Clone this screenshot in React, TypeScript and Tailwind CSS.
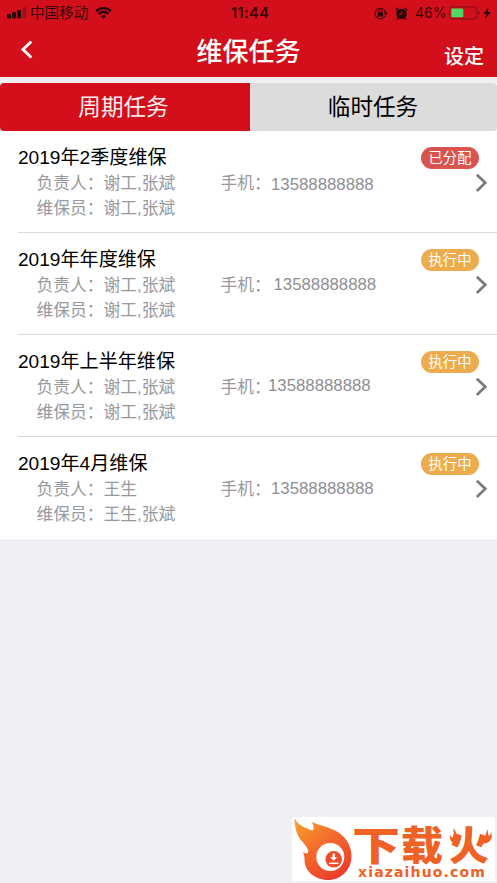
import clsx from "clsx";

type Task = {
  title: string;
  owner: string;
  staff: string;
  phone: string;
  phoneClass: string;
  status: "已分配" | "执行中";
};

const tasks: Task[] = [
  { title: "2019年2季度维保", owner: "谢工,张斌", staff: "谢工,张斌", phone: "13588888888", phoneClass: "ml-[.5px] mt-px", status: "已分配" },
  { title: "2019年年度维保", owner: "谢工,张斌", staff: "谢工,张斌", phone: "13588888888", phoneClass: "ml-[3px] -mt-px", status: "执行中" },
  { title: "2019年上半年维保", owner: "谢工,张斌", staff: "谢工,张斌", phone: "13588888888", phoneClass: "-ml-[2.5px] -mt-[2px]", status: "执行中" },
  { title: "2019年4月维保", owner: "王生", staff: "王生,张斌", phone: "13588888888", phoneClass: "ml-[.5px] -mt-px", status: "执行中" },
];

function StatusBar() {
  return (
    <div className="relative flex h-[26px] items-center text-[#3a0508]">
      <svg className="ml-[7px] h-[12px] w-[21px]" viewBox="0 0 21 12">
        <rect x="0" y="7" width="4" height="4.5" rx="1" fill="#25060a" />
        <rect x="5" y="5" width="4" height="6.5" rx="1" fill="#25060a" />
        <rect x="10" y="3" width="4" height="8.5" rx="1" fill="#25060a" />
        <rect x="15.5" y="0" width="4" height="11.5" rx="1" fill="#9d1019" />
      </svg>
      <span className="ml-[2px] text-[14.6px] leading-[24px]">中国移动</span>
      <svg className="ml-[7px] h-[12px] w-[17px]" viewBox="0 0 17 12">
        <path d="M8.5 11.8 5.9 9.1a3.8 3.8 0 0 1 5.2 0Z" fill="#25060a" />
        <path d="M3.5 6.8a7.2 7.2 0 0 1 10 0M1 4.1a10.9 10.9 0 0 1 15 0" fill="none" stroke="#25060a" strokeWidth="2.3" />
      </svg>
      <span className="absolute left-[231px] top-[1px] font-['Inter','Liberation_Sans',sans-serif] text-[14.5px] font-semibold leading-[24px] tracking-[0.4px]">
        11:44
      </span>
      <div className="ml-auto flex items-center">
        <svg className="h-[13px] w-[14px]" viewBox="0 0 14 13">
          <path d="M11.2 8.8A5.3 5.3 0 1 1 11.6 5.4" fill="none" stroke="#3a0508" strokeWidth="1.1" />
          <path d="M9.6 5.6h4.2l-2.1 2.8Z" fill="#3a0508" />
          <path d="M4.7 6V4.6a1.7 1.7 0 0 1 3.4 0V6" fill="none" stroke="#3a0508" strokeWidth="1" />
          <rect x="3.8" y="5.5" width="5.2" height="3.9" rx=".5" fill="#25060a" />
        </svg>
        <svg className="ml-[7px] h-[13px] w-[13px]" viewBox="0 0 13 13">
          <circle cx="6.5" cy="6.9" r="5.2" fill="#25060a" />
          <path d="m.9 3.2 2.5-2.3M12.1 3.2 9.6.9M3.3 11l-1.1 1.4M9.7 11l1.1 1.4" stroke="#25060a" strokeWidth="1.6" />
          <path d="M6.800 3.900v3.200H4.200" fill="none" stroke="#d20f1b" strokeWidth="1" />
        </svg>
        <span className="ml-[7px] w-[31px] whitespace-nowrap font-['Inter','Liberation_Sans',sans-serif] text-[14px] leading-[24px]">46%</span>
        <svg className="ml-[3px] h-[14px] w-[31px]" viewBox="0 0 31 14">
          <rect x=".7" y=".9" width="27" height="12" rx="3" fill="none" stroke="#8d0e17" strokeWidth="1.1" />
          <rect x="2.3" y="2.5" width="12" height="8.8" rx="1" fill="#4cd964" />
          <path d="M29 5v4q1.6-.5 1.6-2T29 5Z" fill="#8d0e17" />
        </svg>
        <svg className="ml-[3px] mr-[6px] h-[12px] w-[8px]" viewBox="0 0 8 12">
          <path d="M5.7.2.4 6.8h3L2.1 11.8 7.7 5H4.5Z" fill="#25060a" />
        </svg>
      </div>
    </div>
  );
}

function TaskRow({ task, last }: { task: Task; last: boolean }) {
  return (
    <li className="h-[102px] pl-[18px]">
      <div className={clsx("flex h-full justify-between", !last && "border-b border-[#d9d9db]")}>
        <div>
          <h2 className="mt-[14px] h-[26px] text-[19.1px] leading-[26px] text-black">{task.title}</h2>
          <div className="ml-[18.5px] whitespace-nowrap text-[16.8px] leading-[25px] text-[#98989d]">
            <div className="flex h-[25px]">
              <span className="w-[67px]">负责人：</span>
              <span className="w-[117px]">{task.owner}</span>
              <span className="w-[50px]">手机：</span>
              <span className={clsx("text-[#8e8e93]", task.phoneClass)}>{task.phone}</span>
            </div>
            <div className="flex">
              <span className="w-[67px]">维保员：</span>
              <span>{task.staff}</span>
            </div>
          </div>
        </div>
        <div className="flex flex-col items-end">
          <span
            className={clsx(
              "mr-[18px] mt-[16px] flex h-[22px] w-[58px] items-center justify-center rounded-full text-[14.3px] leading-[22px] text-white",
              task.status === "已分配" ? "bg-[#d9534f]" : "bg-[#ecac4e]"
            )}
          >
            {task.status}
          </span>
          <svg className="mr-[9px] mt-[5px] h-[19px] w-[13px]" viewBox="0 0 13 19">
            <path d="m1.8.7 8.500 8.100-8.500 8.100" fill="none" stroke="#7b7b7d" strokeWidth="2.7" />
          </svg>
        </div>
      </div>
    </li>
  );
}

function Watermark() {
  return (
    <div className="absolute bottom-[2px] right-[2px] flex h-[64px] w-[203px] bg-white">
      <svg className="h-[64px] w-[60px] shrink-0" viewBox="0 0 60 64">
        <defs>
          <linearGradient id="flame" x1="0" y1="0" x2=".65" y2="1">
            <stop offset="0" stopColor="#f9a62e" />
            <stop offset=".5" stopColor="#f56b2c" />
            <stop offset="1" stopColor="#eb3f2c" />
          </linearGradient>
        </defs>
        <path
          d="M2.5 1C5 6 9 9 14 11c3 1.500 6 3 7 2 1.500-2 .5-5-1.500-8.500C25 8 34 9 42 13c11 5 17.500 15 17.500 26C59.500 53 49 63 36 63 23 63 12.500 54 12.500 43c0-3-.5-6-1.500-8.500 1.500 2 4 2.500 5 1 1-3-2-6-4.500-9.500C8 22 3 17 2.500 1Z"
          fill="url(#flame)"
        />
        <circle cx="38.300" cy="40" r="14" fill="#fff" />
        <circle cx="41.700" cy="42.300" r="8.300" fill="#ee4c2c" />
        <path d="M41.700 36.500v5" stroke="#fff" strokeWidth="2.200" />
        <path d="M38.200 40.300h7l-3.500 3.500Z" fill="#fff" />
        <path d="M37 46.300h9.400" stroke="#fff" strokeWidth="1.500" />
      </svg>
      <div className="relative text-[#ef6125]">
        <div className="flex h-[49px] w-[143px] pt-[9px] text-[40px] font-black leading-[40px]">
          <span className="w-[49px] origin-left scale-x-[1.2]">下</span>
          <span className="w-[48px] origin-left scale-x-105">载</span>
          <span>火</span>
        </div>
        {/* flame tips on both sides of the last character */}
        <svg className="absolute left-[96px] top-[11px] h-[17px] w-[45px]" viewBox="0 0 45 17">
          <path d="M5 0c4 4 4 7 3 10 2-1 2-3 2-5 3 5 2 9-2 11C4 15 1 12 2 7c1 1 1 2 2 3 2-3 2-6 1-10Z" fill="#ef6125" />
          <path d="M41 0c-2 3-1 5 0 8 1-1 2-2 2-4 2 5 0 9-4 11l-6 1c-1-3 0-6 2-9 0 2 0 3 1 4 2-4 2-8 5-11Z" fill="#ef6125" />
        </svg>
        <div className="ml-[6px] font-['DejaVu_Sans',sans-serif] text-[14px] font-bold leading-[13px] tracking-[1.15px]">xiazaihuo.com</div>
      </div>
    </div>
  );
}

export default function App() {
  return (
    <div className="relative h-[883px] w-[497px] overflow-hidden bg-[#efeff4] font-['Liberation_Sans','Noto_Sans_CJK_SC',sans-serif]">
      <header className="h-[77px] bg-[#d20f1b]">
        <StatusBar />
        <div className="relative flex h-[51px] justify-center text-white">
          <svg className="absolute left-[20px] top-[14px] h-[19px] w-[13px]" viewBox="0 0 13 19">
            <path d="M11.3 1.5 3 9.5l8.3 8" fill="none" stroke="#fff" strokeWidth="2.9" />
          </svg>
          <h1 className="text-[26px] font-medium leading-[52px]">维保任务</h1>
          <button className="absolute right-[13px] top-[16px] text-[20px] font-medium leading-[30px]">设定</button>
        </div>
      </header>

      <div className="mt-[6px] flex h-[48px] bg-white text-[22.6px] leading-[50px]">
        <button className="w-[250px] rounded-l-[4px] bg-[#d20f1b] pr-[3px] text-[#ffeef0]">周期任务</button>
        <button className="flex-1 rounded-r-[4px] bg-[#dcdcdc] pr-px text-black">临时任务</button>
      </div>

      <ul className="bg-white">
        {tasks.map((task, i) => (
          <TaskRow key={task.title} task={task} last={i === tasks.length - 1} />
        ))}
      </ul>

      <Watermark />
    </div>
  );
}
